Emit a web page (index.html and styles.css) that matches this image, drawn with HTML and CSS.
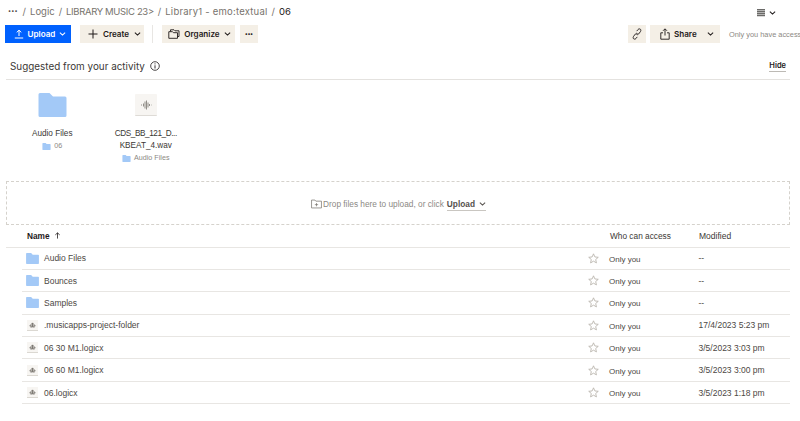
FILE: index.html
```html
<!DOCTYPE html>
<html lang="en">
<head>
<meta charset="utf-8">
<title>06</title>
<link rel="stylesheet" href="styles.css">
</head>
<body>
<svg class="defs" width="0" height="0" aria-hidden="true">
  <symbol id="folder" viewBox="0 0 28 24"><path d="M1.500 0H11l3.500 3.600H26.500A1.500 1.500 0 0 1 28 5.100V22.500A1.500 1.500 0 0 1 26.500 24H1.500A1.500 1.500 0 0 1 0 22.500V1.500A1.500 1.500 0 0 1 1.500 0Z" fill="#a3c9f7"/></symbol>
  <symbol id="chev" viewBox="0 0 8 6"><path d="M1 1.500 4 4.300 7 1.500" fill="none" stroke="currentColor" stroke-width="1.200"/></symbol>
  <symbol id="star" viewBox="0 0 12 12"><path d="M6 .9 7.500 4.300 11.200 4.700 8.400 7.100 9.200 10.800 6 8.900 2.800 10.800 3.600 7.100.8 4.700 4.500 4.300Z" fill="none" stroke="#b5b0a8" stroke-width=".9"/></symbol>
  <symbol id="logic" viewBox="0 0 12 12"><rect width="12" height="12" fill="#f7f5f2"/><rect y="11" width="12" height="1" fill="#d8d5d0"/><path d="M3 6.500 6 3.200 9 6.500M3 6.500H9M4.500 6.500V8.500M7.500 6.500V8.500M6 3.200V8" fill="none" stroke="#77736d" stroke-width="1"/></symbol>
</svg>
<div class="page">
  <nav class="crumbs">
    <span class="dots crumb-dots">•••</span><span class="sep">/</span><span>Logic</span><span class="sep">/</span><span class="caps">LIBRARY MUSIC 23&gt;</span><span class="sep">/</span><span class="wide">Library1 - emo:textual</span><span class="sep">/</span><span class="cur">06</span>
    <span class="view">
      <svg class="view-ic" viewBox="0 0 8 8" width="8" height="8"><path d="M0 .5H8M0 2.500H8M0 4.500H8M0 6.500H8" stroke="#6b6a68" stroke-width="1.300"/></svg>
      <svg class="ch" width="7" height="6"><use href="#chev"/></svg>
    </span>
  </nav>

  <div class="toolbar">
    <button class="btn primary">
      <svg viewBox="0 0 10 10" width="10" height="10"><path d="M5 7V1.200M2.700 3.400 5 1.200 7.300 3.400M.8 9H9.200" fill="none" stroke="#fff" stroke-width="1"/></svg>
      Upload <svg class="ch" width="7" height="6"><use href="#chev"/></svg>
    </button>
    <button class="btn create">
      <svg viewBox="0 0 10 10" width="10" height="10"><path d="M5 .5V9.500M.5 5H9.500" fill="none" stroke="#1e1919" stroke-width="1"/></svg>
      Create <svg class="ch" width="7" height="6"><use href="#chev"/></svg>
    </button>
    <span class="divider"></span>
    <button class="btn organize">
      <svg viewBox="0 0 12 10" width="12" height="10"><path d="M2.500 2.500V.8H6L7 1.800H11V7.500H9.500M.8 2.700H4.500L5.500 3.700H9.500V9.300H.8Z" fill="none" stroke="#1e1919" stroke-width=".9"/></svg>
      Organize <svg class="ch" width="7" height="6"><use href="#chev"/></svg>
    </button>
    <button class="btn more"><span class="dots dark">•••</span></button>
    <div class="tool-right">
      <button class="btn link">
        <svg viewBox="0 0 10 12" width="10" height="12"><path d="M4.800 3.100 6 1.500C6.800.7 8 .7 8.500 1.300S9 3 8.300 3.800L6.500 6.100C5.900 6.800 5 6.900 4.400 6.300M5.200 8.900 4 10.500C3.200 11.300 2 11.300 1.500 10.700S1 9 1.700 8.200L3.500 5.900C4.100 5.200 5 5.100 5.600 5.700" fill="none" stroke="#1e1919" stroke-width=".9"/></svg>
      </button>
      <button class="btn share">
        <svg viewBox="0 0 10 12" width="10" height="12"><path d="M5 7.500V1M3 2.800 5 .8 7 2.800M3 4.800H.8V11.200H9.200V4.800H7" fill="none" stroke="#1e1919" stroke-width=".9"/></svg>
        <span class="share-label">Share</span>
        <svg class="ch" width="7" height="6"><use href="#chev"/></svg>
      </button>
      <span class="access">Only you have access</span>
    </div>
  </div>

  <div class="suggest-head">
    <span class="suggest-title">Suggested from your activity</span>
    <svg viewBox="0 0 10 10" width="10" height="10"><circle cx="5" cy="5" r="4.300" fill="none" stroke="#1e1919" stroke-width=".8"/><path d="M5 4.300V7.500M5 2.400V3.400" stroke="#1e1919" stroke-width=".9"/></svg>
    <span class="hide">Hide</span>
  </div>

  <div class="cards">
    <div class="card">
      <svg class="card-folder"><use href="#folder"/></svg>
      <div class="card-name">Audio Files</div>
      <div class="card-sub"><svg class="mini"><use href="#folder"/></svg>06</div>
    </div>
    <div class="card">
      <div class="wave">
        <svg viewBox="0 0 12 10" width="12" height="10"><path d="M1 5H2M3.500 3.500V6.500M5 1.500V8.500M6.500 .5V9.500M8 2.500V7.500M9.500 4V6M11 5H11.500" fill="none" stroke="#77736d" stroke-width=".8"/></svg>
      </div>
      <div class="card-name"><span class="tight">CDS_BB_121_D...</span><br>KBEAT_4.wav</div>
      <div class="card-sub"><svg class="mini"><use href="#folder"/></svg>Audio Files</div>
    </div>
  </div>

  <div class="drop">
    <svg viewBox="0 0 12 10" width="11" height="10"><path d="M.6 9.300V.7H4.300L5.300 1.900H11.400V9.300ZM6 4V7.500M4.200 5.700H7.800" fill="none" stroke="#77736d" stroke-width=".8"/></svg>
    <span class="drop-text">Drop files here to upload, or click</span>
    <span class="drop-upload">Upload <svg class="ch" width="7" height="6"><use href="#chev"/></svg></span>
  </div>

  <div class="thead">
    <span class="c-name th-name">Name <svg viewBox="0 0 8 8" width="7" height="7"><path d="M4 7.500V1M1.500 3.300 4 1 6.500 3.300" fill="none" stroke="#1e1919" stroke-width=".9"/></svg></span>
    <span class="c-access">Who can access</span>
    <span class="c-mod">Modified</span>
  </div>

  <div class="row"><span class="c-name"><svg class="r-folder"><use href="#folder"/></svg>Audio Files</span><svg class="star"><use href="#star"/></svg><span class="c-access">Only you</span><span class="c-mod">--</span></div>
  <div class="row"><span class="c-name"><svg class="r-folder"><use href="#folder"/></svg>Bounces</span><svg class="star"><use href="#star"/></svg><span class="c-access">Only you</span><span class="c-mod">--</span></div>
  <div class="row"><span class="c-name"><svg class="r-folder"><use href="#folder"/></svg>Samples</span><svg class="star"><use href="#star"/></svg><span class="c-access">Only you</span><span class="c-mod">--</span></div>
  <div class="row"><span class="c-name"><svg class="r-file"><use href="#logic"/></svg>.musicapps-project-folder</span><svg class="star"><use href="#star"/></svg><span class="c-access">Only you</span><span class="c-mod">17/4/2023 5:23 pm</span></div>
  <div class="row"><span class="c-name"><svg class="r-file"><use href="#logic"/></svg>06 30 M1.logicx</span><svg class="star"><use href="#star"/></svg><span class="c-access">Only you</span><span class="c-mod">3/5/2023 3:03 pm</span></div>
  <div class="row"><span class="c-name"><svg class="r-file"><use href="#logic"/></svg>06 60 M1.logicx</span><svg class="star"><use href="#star"/></svg><span class="c-access">Only you</span><span class="c-mod">3/5/2023 3:00 pm</span></div>
  <div class="row"><span class="c-name"><svg class="r-file"><use href="#logic"/></svg>06.logicx</span><svg class="star"><use href="#star"/></svg><span class="c-access">Only you</span><span class="c-mod">3/5/2023 1:18 pm</span></div>
</div>
</body>
</html>
```
FILE: styles.css
```css
* { box-sizing: border-box; }
html, body { margin: 0; height: 100%; background: #fff; overflow: hidden; }
body { font-family: "Liberation Sans", Arial, sans-serif; color: #3b3835; font-size: 8.5px; }
.defs { position: absolute; }
.page { width: 800px; height: 421px; padding: 0 0 0 5px; }

.crumbs { height: 25px; display: flex; align-items: center; gap: 4px; padding: 0 3px 3px 3px; font-family: Inter, sans-serif; font-size: 9.5px; color: #77736d; }
.crumbs .cur { color: #1e1919; }
.caps { letter-spacing: -.35px; }
.wide { letter-spacing: .22px; }
.dots { font-size: 5.5px; letter-spacing: .1px; color: #4c4844; }
.crumb-dots { margin-right: 1px; }
.dots.dark { color: #1e1919; font-weight: 700; }
.view { margin-left: auto; margin-right: 21px; margin-top: 3px; display: flex; align-items: center; gap: 4px; color: #1e1919; }
.view-ic { display: block; }
.ch { display: block; color: inherit; flex: none; }

.toolbar { height: 18px; display: flex; align-items: stretch; padding-right: 3px; }
.btn { border: 0; padding: 0; margin: 0; background: #f4efe6; color: #1e1919; font-family: Inter, sans-serif; font-size: 8.1px; font-weight: 600; display: flex; align-items: center; justify-content: center; gap: 4px; }
.primary { width: 66px; background: #0061fe; color: #fff; margin-right: 9px; padding-left: 4px; }
.create { width: 64px; gap: 5px; padding-left: 5px; }
.divider { width: 1px; background: #e8e6e3; margin: 0 9px 0 8px; }
.organize { width: 73px; padding-left: 2px; }
.more { width: 18px; margin-left: 5px; }
.tool-right { margin-left: auto; display: flex; align-items: stretch; }
.link { width: 18px; margin-right: 4px; }
.share { width: 70px; justify-content: flex-start; padding: 0 6px 0 10px; }
.share-label { margin-right: auto; }
.access { width: 77px; padding-left: 9px; font-size: 7.4px; color: #8c8984; white-space: nowrap; display: flex; align-items: center; }

.suggest-head { height: 37px; margin: 0 10px 0 1px; display: flex; align-items: center; gap: 5px; padding: 10px 4px 0 4px; border-bottom: 1px solid #e4e2df; font-family: Inter, sans-serif; font-size: 9.9px; color: #3b3835; }
.hide { margin-left: auto; font-size: 7.5px; font-weight: 600; color: #1e1919; border-bottom: 1px solid #bdbab5; padding-bottom: 1px; }

.cards { height: 101px; display: flex; padding-left: .5px; }
.card { width: 93.5px; padding-top: 13px; display: flex; flex-direction: column; align-items: center; text-align: center; }
.card-folder { width: 29px; height: 24px; margin-bottom: 11px; display: block; }
.wave { width: 22px; height: 22px; margin-top: 1px; margin-bottom: 12px; background: #f7f5f2; border-bottom: 1px solid #dedbd6; border-radius: 1px; display: flex; align-items: center; justify-content: center; }
.card-name { font-size: 8.2px; line-height: 12px; color: #3b3835; }
.tight { letter-spacing: -.42px; }
.card-sub { display: flex; align-items: center; gap: 3px; font-size: 7.2px; line-height: 12px; color: #8c8984; }
.mini { width: 9px; height: 7px; display: block; }

.drop { height: 44px; margin: 0 10px 0 1px; border: 1px dashed #d5d2cc; display: flex; align-items: center; justify-content: center; gap: 1px; font-size: 8.3px; color: #8c8984; padding: 2px 0 0 1px; }
.drop-upload { display: flex; align-items: center; gap: 4px; margin-left: 2px; font-weight: 700; color: #55514d; border-bottom: 1px solid #c9c6c1; padding: 1px 0 1px 0; }

.thead { height: 22.5px; margin: 0 10px 0 1px; display: flex; align-items: center; border-bottom: 1px solid #e8e6e3; font-size: 8.3px; color: #3b3835; }
.th-name { padding-left: 21px; font-weight: 700; color: #1e1919; gap: 4px; }
.row { height: 22.4px; margin: 0 10px 0 17px; display: flex; align-items: center; border-bottom: 1px solid #e8e6e3; font-size: 8.5px; color: #4c4844; }
.c-name { display: flex; align-items: center; flex: 0 0 583px; }
.thead .c-name { flex-basis: 604px; }
.row .c-name { flex-basis: 566px; }
.star { width: 11px; height: 11px; display: block; flex: none; margin-right: 10px; }
.c-access { flex: 0 0 89px; }
.row .c-access { padding-top: 2px; font-size: 8px; flex-basis: 89.5px; }
.c-mod { white-space: nowrap; font-size: 8.5px; }
.r-folder { width: 13px; height: 11px; margin: 0 5px 0 4px; display: block; flex: none; }
.r-file { width: 11px; height: 11px; margin: 0 6px 0 5px; display: block; flex: none; }
```
